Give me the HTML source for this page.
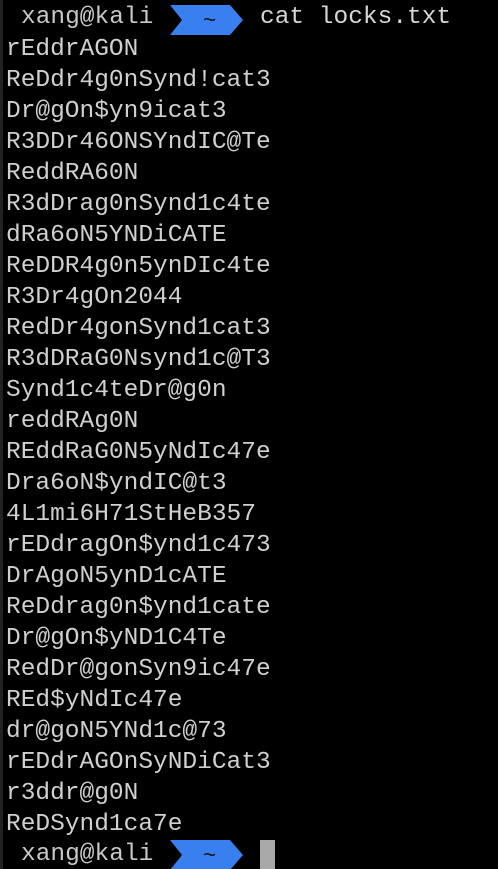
<!DOCTYPE html>
<html><head><style>
html,body{margin:0;padding:0;background:#000;width:498px;height:869px;overflow:hidden}
body{font-family:"Liberation Mono","DejaVu Sans Mono",monospace;font-size:24.5px;color:#d0d0d0;position:relative}
.l{position:absolute;left:6px;white-space:pre;line-height:31px;height:31px;margin-top:1px}
.edge{position:absolute;left:0;top:0;width:3px;height:869px;background:#222}
.p{position:absolute;left:0;height:31px;width:498px}
.u{position:absolute;left:21px;top:0;line-height:31px;color:#c8c8c8}
.bar{position:absolute;left:170px;top:3px}
.cmd{position:absolute;left:260px;top:0;line-height:31px;color:#d6d6d6}
.cur{position:absolute;left:260px;top:40px;width:15px;height:29px;background:#a8a8a8}
</style></head><body>
<div class="edge"></div>
<div class="p" style="top:2px">
 <span class="u">xang@kali</span>
 <svg class="bar" width="74" height="30"><polygon points="0,0 60,0 73,15 60,30 0,30 12,15" fill="#3a7ff0"/><text x="33" y="22" fill="#111" font-family="Liberation Mono" font-size="22">~</text></svg>
 <span class="cmd">cat locks.txt</span>
</div>
<div class="l" style="top:33px">rEddrAGON</div>
<div class="l" style="top:64px">ReDdr4g0nSynd!cat3</div>
<div class="l" style="top:95px">Dr@gOn$yn9icat3</div>
<div class="l" style="top:126px">R3DDr46ONSYndIC@Te</div>
<div class="l" style="top:157px">ReddRA60N</div>
<div class="l" style="top:188px">R3dDrag0nSynd1c4te</div>
<div class="l" style="top:219px">dRa6oN5YNDiCATE</div>
<div class="l" style="top:250px">ReDDR4g0n5ynDIc4te</div>
<div class="l" style="top:281px">R3Dr4gOn2044</div>
<div class="l" style="top:312px">RedDr4gonSynd1cat3</div>
<div class="l" style="top:343px">R3dDRaG0Nsynd1c@T3</div>
<div class="l" style="top:374px">Synd1c4teDr@g0n</div>
<div class="l" style="top:405px">reddRAg0N</div>
<div class="l" style="top:436px">REddRaG0N5yNdIc47e</div>
<div class="l" style="top:467px">Dra6oN$yndIC@t3</div>
<div class="l" style="top:498px">4L1mi6H71StHeB357</div>
<div class="l" style="top:529px">rEDdragOn$ynd1c473</div>
<div class="l" style="top:560px">DrAgoN5ynD1cATE</div>
<div class="l" style="top:591px">ReDdrag0n$ynd1cate</div>
<div class="l" style="top:622px">Dr@gOn$yND1C4Te</div>
<div class="l" style="top:653px">RedDr@gonSyn9ic47e</div>
<div class="l" style="top:684px">REd$yNdIc47e</div>
<div class="l" style="top:715px">dr@goN5YNd1c@73</div>
<div class="l" style="top:746px">rEDdrAGOnSyNDiCat3</div>
<div class="l" style="top:777px">r3ddr@g0N</div>
<div class="l" style="top:808px">ReDSynd1ca7e</div>
<div class="p" style="top:839px">
 <span class="u">xang@kali</span>
 <svg class="bar" width="74" height="30" style="top:1px"><polygon points="0,0 60,0 73,15 60,30 0,30 12,15" fill="#3a7ff0"/><text x="33" y="22" fill="#111" font-family="Liberation Mono" font-size="22">~</text></svg>
</div>
<div class="cur" style="top:840px"></div>
</body></html>
